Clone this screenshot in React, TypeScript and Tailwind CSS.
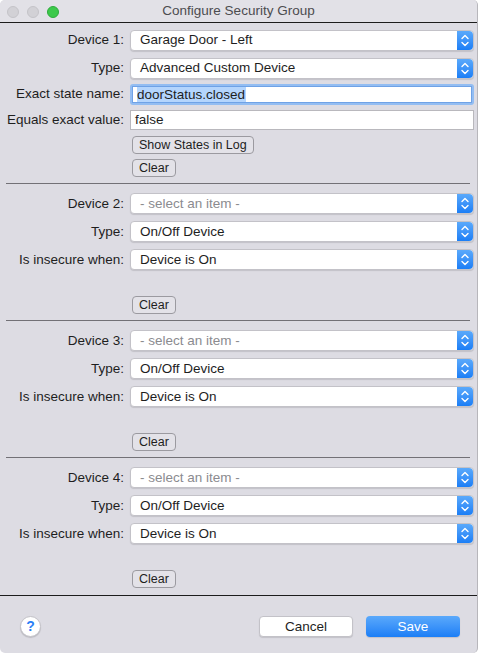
import React from "react";

const font = { fontFamily: '"Liberation Sans", Arial, sans-serif' };

const Stepper = () => (
  <div className="flex h-full w-[16px] shrink-0 items-center justify-center rounded-r-[4px] bg-gradient-to-b from-[#5aa9fb] to-[#1a7ef6]">
    <svg width="8" height="13" viewBox="0 0 8 13" fill="none" stroke="white" strokeWidth="1.4" strokeLinecap="round" strokeLinejoin="round">
      <path d="M1 4.5 L4 1.5 L7 4.5" />
      <path d="M1 8.5 L4 11.5 L7 8.5" />
    </svg>
  </div>
);

const Select = ({ value, placeholder }: { value: string; placeholder?: boolean }) => (
  <div className="flex h-[21px] w-full items-stretch rounded-[4px] border border-[#c3c2c8] bg-white shadow-[0_1px_1px_rgba(0,0,0,0.12)]">
    <div className={`flex flex-1 items-center pl-[9px] text-[13.5px] ${placeholder ? "text-[#8b8b8f]" : "text-[#1e1e1e]"}`}>
      {value}
    </div>
    <Stepper />
  </div>
);

const TextInput = ({ value, focused }: { value: string; focused?: boolean }) =>
  focused ? (
    <div className="rounded-[3px] bg-[#93bdf2] p-[2px]">
      <div className="flex h-[17px] items-center border border-[#6fa2e6] bg-white pl-[4px] text-[13.5px] text-[#1e1e1e]">
        <span className="bg-[#b4d5fd] pr-px leading-[15px]">{value}</span>
      </div>
    </div>
  ) : (
    <div className="flex h-[20px] items-center border border-[#b9b8bd] bg-white pl-[4px] text-[13.5px] text-[#1e1e1e]">
      {value}
    </div>
  );

const SmallButton = ({ label }: { label: string }) => (
  <button className="flex h-[18px] items-center rounded-[4px] border border-[#9b9aa0] bg-[#e3e2e8] px-[6px] text-[12.5px] leading-none text-[#1e1e1e]">
    {label}
  </button>
);

const Row = ({ label, children, className = "" }: { label: string; children: React.ReactNode; className?: string }) => (
  <div className={`grid grid-cols-[124px_1fr] items-center gap-x-[6px] ${className}`}>
    <div className="text-right text-[13.5px] text-[#1e1e1e]">{label}</div>
    <div>{children}</div>
  </div>
);

const Divider = () => <div className="ml-[6px] mr-[4px] h-px bg-[#727176]" />;

const DeviceSection = ({ n, last }: { n: number; last?: boolean }) => (
  <div className="flex flex-col pt-[9px]">
    <Row label={`Device ${n}:`}>
      <Select value="- select an item -" placeholder />
    </Row>
    <Row label="Type:" className="mt-[7px]">
      <Select value="On/Off Device" />
    </Row>
    <Row label="Is insecure when:" className="mt-[7px]">
      <Select value="Device is On" />
    </Row>
    <div className={`ml-[132px] mt-[26px] ${last ? "mb-[7px]" : "mb-[6px]"}`}>
      <SmallButton label="Clear" />
    </div>
  </div>
);

export default function App() {
  return (
    <div className="h-[655px] w-[482px] overflow-hidden bg-white" style={font}>
      <div className="flex h-[653px] w-[478px] flex-col overflow-hidden rounded-[5px] border-r border-[#b7b6bb] bg-[#dddce3]">
        {/* title bar */}
        <div className="relative flex h-[23px] shrink-0 items-center justify-center border-b border-[#1c1c1c] bg-[#e2e1e7]">
          <div className="absolute left-[7px] top-[6px] flex gap-[8px]">
            <span className="h-[12px] w-[12px] rounded-full border border-[#c4c3c8] bg-[#d2d1d6]" />
            <span className="h-[12px] w-[12px] rounded-full border border-[#c4c3c8] bg-[#d2d1d6]" />
            <span className="h-[12px] w-[12px] rounded-full border border-[#2eab3c] bg-[#3cc94b]" />
          </div>
          <span className="text-[13.5px] text-[#4c4c4f]">Configure Security Group</span>
        </div>

        <div className="pr-[3px]">
          {/* device 1 */}
          <div className="flex flex-col pt-[7px]">
            <Row label="Device 1:">
              <Select value="Garage Door - Left" />
            </Row>
            <Row label="Type:" className="mt-[7px]">
              <Select value="Advanced Custom Device" />
            </Row>
            <Row label="Exact state name:" className="mt-[5px]">
              <TextInput value="doorStatus.closed" focused />
            </Row>
            <Row label="Equals exact value:" className="mt-[5px]">
              <TextInput value="false" />
            </Row>
            <div className="ml-[132px] mt-[6px]">
              <SmallButton label="Show States in Log" />
            </div>
            <div className="ml-[132px] mt-[5px] mb-[6px]">
              <SmallButton label="Clear" />
            </div>
          </div>
        </div>

        {[2, 3, 4].map((n) => (
          <div key={n} className="pr-[3px]">
            <Divider />
            <DeviceSection n={n} last={n === 4} />
          </div>
        ))}

        <div className="h-px bg-[#1c1c1c]" />

        {/* footer */}
        <div className="flex items-center pl-[20px] pr-[17px] pt-[20px]">
          <div className="flex h-[21px] w-[21px] items-center justify-center rounded-full border border-[#c3c2c8] bg-white text-[14px] font-bold text-[#2b7ff6] shadow-[0_1px_1px_rgba(0,0,0,0.15)]">
            ?
          </div>
          <div className="ml-auto flex gap-[13px]">
            <button className="h-[21px] w-[94px] rounded-[4px] border border-[#c3c2c8] bg-white text-[13.5px] text-[#1e1e1e] shadow-[0_1px_1px_rgba(0,0,0,0.12)]">
              Cancel
            </button>
            <button className="h-[21px] w-[94px] rounded-[4px] bg-gradient-to-b from-[#5aa9fb] to-[#1a7ef6] text-[13.5px] text-white shadow-[0_1px_1px_rgba(0,0,0,0.12)]">
              Save
            </button>
          </div>
        </div>
      </div>
    </div>
  );
}
